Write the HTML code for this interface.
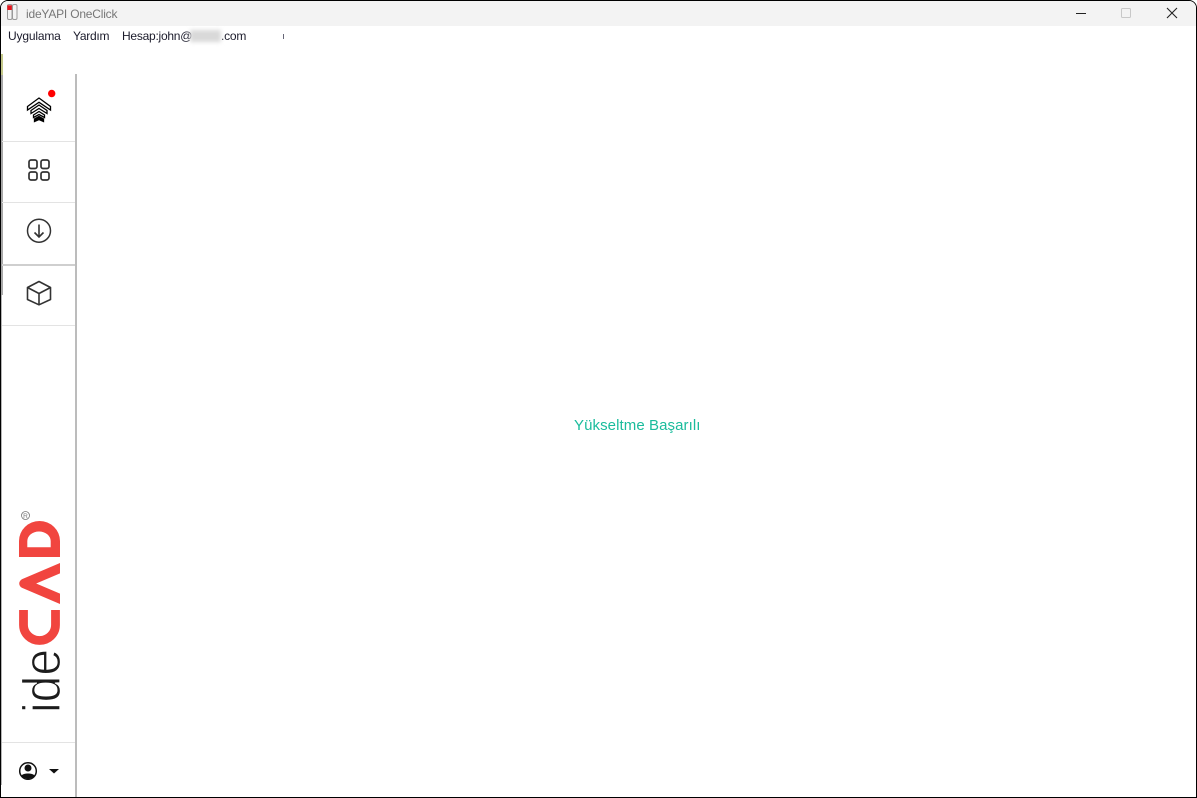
<!DOCTYPE html>
<html lang="tr">
<head>
<meta charset="utf-8">
<title>ideYAPI OneClick</title>
<style>
html,body{margin:0;padding:0;width:1197px;height:798px;overflow:hidden;background:#fff;}
body{font-family:"Liberation Sans",sans-serif;position:relative;}
.abs{position:absolute;white-space:nowrap;}
#win{position:absolute;left:0;top:0;width:1195px;height:796px;border:1px solid #000;border-radius:8px 8px 0 0;overflow:hidden;background:#fff;}
#tb{position:absolute;left:0;top:0;width:1195px;height:25px;background:#f3f3f3;}
.m{font-size:12px;line-height:14px;color:#1b1b2b;top:29px;}
.hr{position:absolute;left:2px;width:73px;height:1px;background:#e3e3e3;}
svg{position:absolute;left:0;top:0;}
</style>
</head>
<body>
<div id="win"><div id="tb"></div></div>

<div class="abs" style="left:26px;top:7px;font-size:12px;line-height:14px;color:#777;letter-spacing:-.2px;">ideYAPI OneClick</div>
<div class="abs m" style="left:8px;letter-spacing:-.17px;">Uygulama</div>
<div class="abs m" style="left:73px;letter-spacing:-.27px;">Yardım</div>
<div class="abs m" style="left:122px;letter-spacing:-.25px;">Hesap:john@</div>
<div class="abs m" style="left:221px;letter-spacing:-.2px;">.com</div>
<div class="abs" style="left:190px;top:30px;width:31px;height:12px;background:#d9d9d9;filter:blur(2px);"></div>
<div class="abs" style="left:283px;top:34px;width:1px;height:5px;background:#667;"></div>

<!-- left window edge details -->
<div class="abs" style="left:1px;top:54px;width:2px;height:21px;background:#c4c88a;"></div>
<div class="abs" style="left:1px;top:75px;width:2px;height:220px;background:#a8a8a8;"></div>
<div class="abs" style="left:1px;top:295px;width:1px;height:490px;background:#b5b5b5;"></div>

<!-- sidebar -->
<div class="abs" style="left:75px;top:74px;width:2px;height:723px;background:#bcbcbc;"></div>
<div class="hr" style="top:141px;"></div>
<div class="hr" style="top:202px;"></div>
<div class="hr" style="top:264px;height:2px;background:#cfcfcf;"></div>
<div class="hr" style="top:325px;"></div>
<div class="hr" style="top:742px;"></div>

<div class="abs" style="left:574px;top:417px;font-size:15px;line-height:17px;color:#1abc9c;letter-spacing:.08px;">Yükseltme Başarılı</div>

<svg width="1197" height="798" viewBox="0 0 1197 798" fill="none">
  <!-- app icon -->
  <rect x="7.500" y="4.500" width="4.500" height="15" rx="1.500" stroke="#999" stroke-width="1"/>
  <rect x="12.500" y="4.500" width="4.500" height="15" rx="1.500" stroke="#999" stroke-width="1"/>
  <rect x="7.300" y="5.300" width="4.500" height="4.700" fill="#e8141c"/>

  <!-- window controls -->
  <path d="M1076 13.500H1086" stroke="#222" stroke-width="1"/>
  <rect x="1121.500" y="8.500" width="9" height="9" rx="1" stroke="#c8c8c8" stroke-width="1"/>
  <path d="M1167 8L1177 18M1177 8L1167 18" stroke="#222" stroke-width="1.100"/>

  <!-- upgrade icon -->
  <circle cx="51.700" cy="93.500" r="3.700" fill="#f00"/>
  <g stroke="#000" stroke-width="1.300" stroke-linejoin="miter">
    <path d="M27.500 106.500L39 98L50.500 106.500V110L39 102.300L27.500 110Z"/>
    <path d="M31 110.500L39 105L47 110.500V113.500L39 108.500L31 113.500Z"/>
    <path d="M33.500 115L39 111.500L44.500 115V117.500L39 114.500L33.500 117.500Z"/>
    <path d="M34.500 119L39 116.500L43.500 119V121.500L39 119.500L34.500 121.500Z" fill="#000"/>
  </g>

  <!-- grid icon -->
  <g stroke="#333" stroke-width="1.700">
    <rect x="29" y="160" width="8" height="8.500" rx="2"/>
    <rect x="41" y="160" width="8" height="8.500" rx="2"/>
    <rect x="29" y="172" width="8" height="8" rx="2"/>
    <rect x="41" y="172" width="8" height="8" rx="2"/>
  </g>

  <!-- download icon -->
  <circle cx="39" cy="230.700" r="11.500" stroke="#333" stroke-width="1.500"/>
  <path d="M39 224.500V236.500M34.500 232.500L39 237L43.500 232.500" stroke="#333" stroke-width="1.600"/>

  <!-- cube icon -->
  <path d="M39 281.500L50.500 287.500V299.500L39 304.800L27.500 299.500V287.500Z" stroke="#333" stroke-width="1.600" stroke-linejoin="round"/>
  <path d="M27.500 287.500L39 293.500L50.500 287.500M39 293.500V304.800" stroke="#333" stroke-width="1.600" stroke-linejoin="round"/>

  <!-- logo -->
  <path fill-rule="evenodd" fill="#f1453f" d="M19 557H60V541A20.500 20 0 0 0 19 541ZM27.300 547.300H50.700V541A11.700 9.500 0 0 0 27.300 541Z"/>
  <clipPath id="lc"><rect x="0" y="555" width="60" height="60"/></clipPath>
  <path clip-path="url(#lc)" d="M64 566.500L24 583.500L64 600.500" stroke="#f1453f" stroke-width="9.500" stroke-linejoin="round"/>
  <path d="M23.500 610V625A16 15.500 0 0 0 55.500 625V610" stroke="#f1453f" stroke-width="8.800"/>
  <circle cx="25.500" cy="515.500" r="4" stroke="#777" stroke-width=".8"/>
  <text x="25.500" y="518" font-size="6.500" fill="#777" text-anchor="middle" font-family="Liberation Sans, sans-serif">R</text>
  <text transform="translate(59.800 713) rotate(-90)" font-family="Liberation Sans, sans-serif" font-size="53" fill="#1c1c1c" stroke="#fff" stroke-width="1.200" textLength="64" lengthAdjust="spacingAndGlyphs">ide</text>

  <!-- user icon -->
  <circle cx="28" cy="771" r="8.300" stroke="#111" stroke-width="1.500"/>
  <circle cx="28" cy="768" r="3.500" fill="#111"/>
  <path d="M21.500 775.500C23.500 772.800 32.500 772.800 34.500 775.500C32.500 779.500 23.500 779.500 21.500 775.500Z" fill="#111"/>
  <path d="M49 769H59L54 773.500Z" fill="#111"/>
</svg>
</body>
</html>
